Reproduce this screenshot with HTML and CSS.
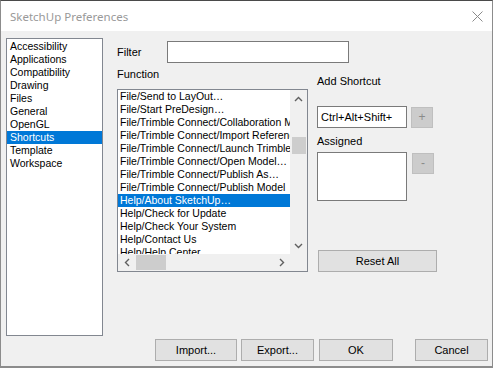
FILE: index.html
```html
<!DOCTYPE html>
<html lang="en">

<head>
    <meta charset="UTF-8">
    <title>SketchUp Preferences</title>
    <link rel="stylesheet" href="styles.css">
</head>

<body>
    <div class="window">
        <div class="titlebar">
            <span class="title">SketchUp Preferences</span>
            <svg class="close-icon" viewBox="0 0 11 11" width="11" height="11">
                <path d="M0.5 0.5L10.5 10.5M10.5 0.5L0.5 10.5" stroke="#8a8a8a" stroke-width="1" fill="none" />
            </svg>
        </div>
        <div class="dialog">
            <div class="main">
                <ul class="category-list">
                    <li>Accessibility</li>
                    <li>Applications</li>
                    <li>Compatibility</li>
                    <li>Drawing</li>
                    <li>Files</li>
                    <li>General</li>
                    <li>OpenGL</li>
                    <li class="selected">Shortcuts</li>
                    <li>Template</li>
                    <li>Workspace</li>
                </ul>
                <div class="panel">
                    <div class="filter-row">
                        <span class="filter-label">Filter</span>
                        <div class="text-box filter-box"></div>
                    </div>
                    <div class="columns">
                        <div class="func-col">
                            <div class="label func-label">Function</div>
                            <div class="func-list">
                                <div class="func-rows">
                                    <div class="row">File/Send to LayOut…</div>
                                    <div class="row">File/Start PreDesign…</div>
                                    <div class="row">File/Trimble Connect/Collaboration Manager…</div>
                                    <div class="row">File/Trimble Connect/Import Reference…</div>
                                    <div class="row">File/Trimble Connect/Launch Trimble Connect…</div>
                                    <div class="row">File/Trimble Connect/Open Model…</div>
                                    <div class="row">File/Trimble Connect/Publish As…</div>
                                    <div class="row">File/Trimble Connect/Publish Model</div>
                                    <div class="row selected">Help/About SketchUp…</div>
                                    <div class="row">Help/Check for Update</div>
                                    <div class="row">Help/Check Your System</div>
                                    <div class="row">Help/Contact Us</div>
                                    <div class="row">Help/Help Center</div>
                                </div>
                                <div class="vscroll">
                                    <div class="arrow">
                                        <svg viewBox="0 0 9 6" width="9" height="6"><path d="M1 5L4.5 1.5L8 5" stroke="#606060" stroke-width="1.4" fill="none" /></svg>
                                    </div>
                                    <div class="vtrack">
                                        <div class="vthumb"></div>
                                    </div>
                                    <div class="arrow">
                                        <svg viewBox="0 0 9 6" width="9" height="6"><path d="M1 1L4.5 4.5L8 1" stroke="#606060" stroke-width="1.4" fill="none" /></svg>
                                    </div>
                                </div>
                                <div class="hscroll">
                                    <div class="arrow">
                                        <svg viewBox="0 0 6 9" width="6" height="9"><path d="M5 1L1.5 4.5L5 8" stroke="#606060" stroke-width="1.4" fill="none" /></svg>
                                    </div>
                                    <div class="htrack">
                                        <div class="hthumb"></div>
                                    </div>
                                    <div class="arrow">
                                        <svg viewBox="0 0 6 9" width="6" height="9"><path d="M1 1L4.5 4.5L1 8" stroke="#606060" stroke-width="1.4" fill="none" /></svg>
                                    </div>
                                </div>
                                <div class="corner"></div>
                            </div>
                        </div>
                        <div class="shortcut-col">
                            <div class="label add-label">Add Shortcut</div>
                            <div class="shortcut-row">
                                <div class="text-box shortcut-box">Ctrl+Alt+Shift+</div>
                                <div class="small-btn plus-btn">+</div>
                            </div>
                            <div class="label assigned-label">Assigned</div>
                            <div class="assigned-row">
                                <div class="text-box assigned-box"></div>
                                <div class="small-btn minus-btn">-</div>
                            </div>
                            <div class="btn reset-btn">Reset All</div>
                        </div>
                    </div>
                </div>
            </div>
            <div class="footer">
                <div class="btn import-btn">Import...</div>
                <div class="btn export-btn">Export...</div>
                <div class="btn ok-btn">OK</div>
                <div class="btn cancel-btn">Cancel</div>
            </div>
        </div>
    </div>
</body>

</html>
```

FILE: styles.css
```css
body,
html {
    margin: 0;
    padding: 0;
    width: 493px;
    height: 368px;
    overflow: hidden;
    font-family: 'Liberation Sans', Arial, sans-serif;
    font-size: 11px;
    color: #000;
}

.window {
    box-sizing: border-box;
    width: 493px;
    height: 368px;
    border: 1px solid #8c8c8c;
    border-top-color: #4a4a4a;
    border-bottom-width: 2px;
    display: flex;
    flex-direction: column;
    background-color: #f0f0f0;
}

.titlebar {
    height: 30px;
    flex-shrink: 0;
    background-color: #fff;
    display: flex;
    align-items: center;
    justify-content: space-between;
    padding: 0 8px 0 9px;
}

.title {
    font-family: 'Noto Sans', 'Open Sans', sans-serif;
    font-size: 11.5px;
    color: #999;
    margin-top: 1px;
}

.close-icon {
    margin-right: 1px;
    margin-top: 1px;
}

.dialog {
    flex-grow: 1;
    display: flex;
    flex-direction: column;
    padding: 7px 4px 0 5px;
}

.main {
    display: flex;
    height: 298px;
}

.category-list {
    list-style-type: none;
    margin: 0;
    padding: 1px 0 0 0;
    width: 97px;
    box-sizing: border-box;
    border: 1px solid #828790;
    background-color: #fff;
    font-size: 10.5px;
}

.category-list li {
    height: 13px;
    line-height: 13px;
    padding-left: 3px;
}

.selected {
    background-color: #0078d7;
    color: #fff;
}

.panel {
    margin-left: 14px;
    display: flex;
    flex-direction: column;
}

.filter-row {
    display: flex;
    margin-top: 3px;
    height: 22px;
}

.filter-label {
    width: 50px;
    line-height: 22px;
}

.text-box {
    box-sizing: border-box;
    border: 1px solid #7a7a7a;
    background-color: #fff;
}

.filter-box {
    width: 182px;
    height: 22px;
}

.columns {
    display: flex;
}

.label {
    height: 13px;
    line-height: 13px;
}

.func-col {
    width: 191px;
}

.func-label {
    margin-top: 5px;
    margin-bottom: 8px;
}

.func-list {
    box-sizing: border-box;
    width: 191px;
    height: 183px;
    border: 1px solid #828790;
    background-color: #fff;
    display: grid;
    grid-template-columns: 172px 17px;
    grid-template-rows: 164px 17px;
}

.func-rows {
    overflow: hidden;
    font-size: 10.5px;
}

.row {
    height: 13px;
    line-height: 13px;
    padding-left: 2px;
    white-space: nowrap;
}

.vscroll {
    background-color: #f0f0f0;
    display: flex;
    flex-direction: column;
}

.hscroll {
    background-color: #f0f0f0;
    display: flex;
}

.arrow {
    width: 17px;
    height: 17px;
    flex-shrink: 0;
    display: flex;
    align-items: center;
    justify-content: center;
}

.vtrack {
    flex-grow: 1;
    padding-top: 30px;
}

.vthumb {
    height: 17px;
    margin: 0 1px 0 2px;
    background-color: #cdcdcd;
}

.htrack {
    flex-grow: 1;
    padding: 1px 0 1px 1px;
}

.hthumb {
    width: 30px;
    height: 15px;
    background-color: #cdcdcd;
}

.corner {
    background-color: #f0f0f0;
}

.shortcut-col {
    margin-left: 9px;
    display: flex;
    flex-direction: column;
}

.add-label {
    margin-top: 12px;
}

.shortcut-row {
    display: flex;
    margin-top: 18px;
}

.shortcut-box {
    width: 90px;
    height: 22px;
    line-height: 20px;
    padding-left: 3px;
}

.small-btn {
    box-sizing: border-box;
    width: 22px;
    height: 21px;
    margin-top: 1px;
    background-color: #cccccc;
    border: 1px solid #bfbfbf;
    color: #8a8a8a;
    text-align: center;
    line-height: 18px;
    font-size: 12px;
}

.plus-btn {
    margin-left: 4px;
}

.assigned-label {
    margin-top: 7px;
}

.assigned-row {
    display: flex;
    margin-top: 4px;
}

.assigned-box {
    width: 90px;
    height: 49px;
}

.minus-btn {
    margin-left: 5px;
}

.btn {
    box-sizing: border-box;
    height: 22px;
    background-color: #e1e1e1;
    border: 1px solid #adadad;
    text-align: center;
    line-height: 20px;
}

.reset-btn {
    width: 119px;
    margin-top: 49px;
    margin-left: 1px;
}

.footer {
    display: flex;
    justify-content: flex-end;
    margin-top: 3px;
}

.import-btn {
    width: 82px;
}

.export-btn {
    width: 73px;
    margin-left: 4px;
}

.ok-btn {
    width: 74px;
    margin-left: 5px;
}

.cancel-btn {
    width: 73px;
    margin-left: 22px;
}
```
